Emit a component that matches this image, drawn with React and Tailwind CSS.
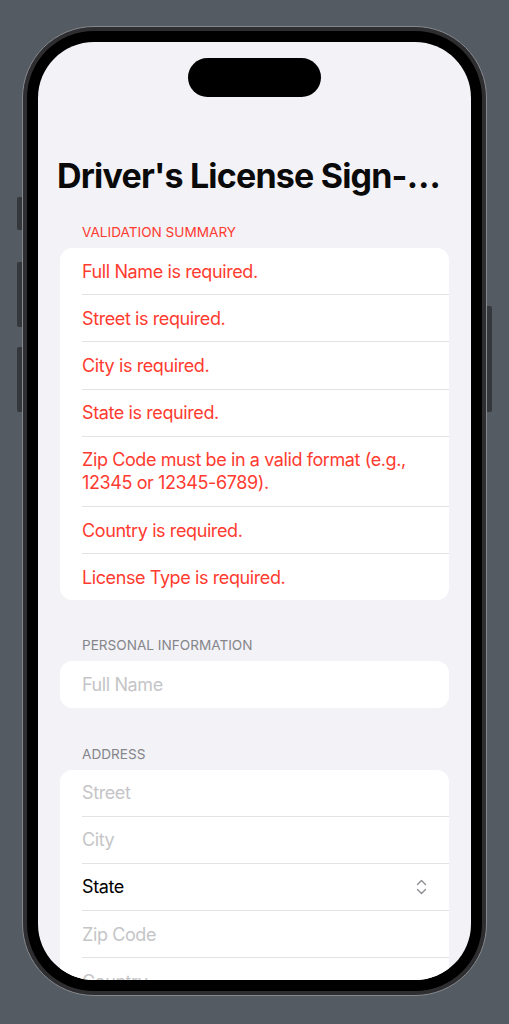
const errors = [
  "Full Name is required.",
  "Street is required.",
  "City is required.",
  "State is required.",
  ["Zip Code must be in a valid format (e.g.,", "12345 or 12345-6789)."],
  "Country is required.",
  "License Type is required.",
];

const SectionHeader = ({ children, red }) => (
  <div
    className={`px-[44px] pb-[7px] text-[13.6px] leading-[18px] uppercase whitespace-nowrap ${
      red ? "text-[#ff3b30]" : "text-[#86868a]"
    }`}
  >
    {children}
  </div>
);

const Row = ({ children, first, className = "" }) => (
  <div className={first ? "" : "ml-[22px] border-t border-[#e3e3e6]"}>
    <div
      className={`py-[11.6px] pr-[22px] text-[18px] leading-[23px] tracking-[-0.4px] whitespace-nowrap ${
        first ? "pl-[22px]" : ""
      } ${className}`}
    >
      {children}
    </div>
  </div>
);

const UpDown = () => (
  <svg width="11" height="16" viewBox="0 0 11 16" fill="none" stroke="#8e8e93" strokeWidth="1.4" strokeLinecap="round" strokeLinejoin="round">
    <path d="M1.5 5.5 L5.5 1.5 L9.5 5.5" />
    <path d="M1.5 10.5 L5.5 14.5 L9.5 10.5" />
  </svg>
);

export default function App() {
  return (
    <div className="h-screen w-full overflow-hidden bg-[#555b63] flex justify-center pt-[26px]" style={{ fontFamily: "Inter, 'Noto Sans', sans-serif" }}>
      <div className="relative w-[465px] h-[970px] shrink-0">
        {/* side buttons */}
        <div className="absolute left-[-5px] top-[171px] w-[5px] h-[33px] rounded-l-[2px] bg-[#34373c]" />
        <div className="absolute left-[-5px] top-[236px] w-[5px] h-[65px] rounded-l-[2px] bg-[#34373c]" />
        <div className="absolute left-[-5px] top-[321px] w-[5px] h-[65px] rounded-l-[2px] bg-[#34373c]" />
        <div className="absolute right-[-5px] top-[280px] w-[5px] h-[106px] rounded-r-[2px] bg-[#34373c]" />

        <div className="h-full rounded-[72px] border border-[#85888d] bg-[#2e2e30] p-[4px]">
          <div className="h-full rounded-[67px] bg-black p-[11px]">
            <div className="relative h-full rounded-[56px] bg-[#f2f2f7] overflow-hidden">
              <div className="absolute left-[150px] top-[16px] w-[133px] h-[39px] rounded-full bg-black" />

              <div className="pt-[112px]">
                <h1 className="px-[19px] text-[34px] leading-[44px] font-bold text-[#0a0a0a] whitespace-nowrap tracking-[-0.8px]">
                  Driver's License Sign-…
                </h1>

                <div className="pt-[25px]">
                  <SectionHeader red>Validation Summary</SectionHeader>
                  <div className="mx-[22px] rounded-[12px] bg-white text-[#ff3b30]">
                    {errors.map((e, i) => (
                      <Row key={i} first={i === 0}>
                        {Array.isArray(e) ? (
                          <>
                            {e[0]}
                            <br />
                            {e[1]}
                          </>
                        ) : (
                          e
                        )}
                      </Row>
                    ))}
                  </div>
                </div>

                <div className="pt-[36px]">
                  <SectionHeader>Personal Information</SectionHeader>
                  <div className="mx-[22px] rounded-[12px] bg-white">
                    <Row first className="text-[#c5c5c7]">Full Name</Row>
                  </div>
                </div>

                <div className="pt-[37px]">
                  <SectionHeader>Address</SectionHeader>
                  <div className="mx-[22px] rounded-[12px] bg-white">
                    <Row first className="text-[#c5c5c7]">Street</Row>
                    <Row className="text-[#c5c5c7]">City</Row>
                    <Row className="text-black flex items-center justify-between">
                      <span>State</span>
                      <UpDown />
                    </Row>
                    <Row className="text-[#c5c5c7]">Zip Code</Row>
                    <Row className="text-[#c5c5c7]">Country</Row>
                  </div>
                </div>
              </div>
            </div>
          </div>
        </div>
      </div>
    </div>
  );
}
